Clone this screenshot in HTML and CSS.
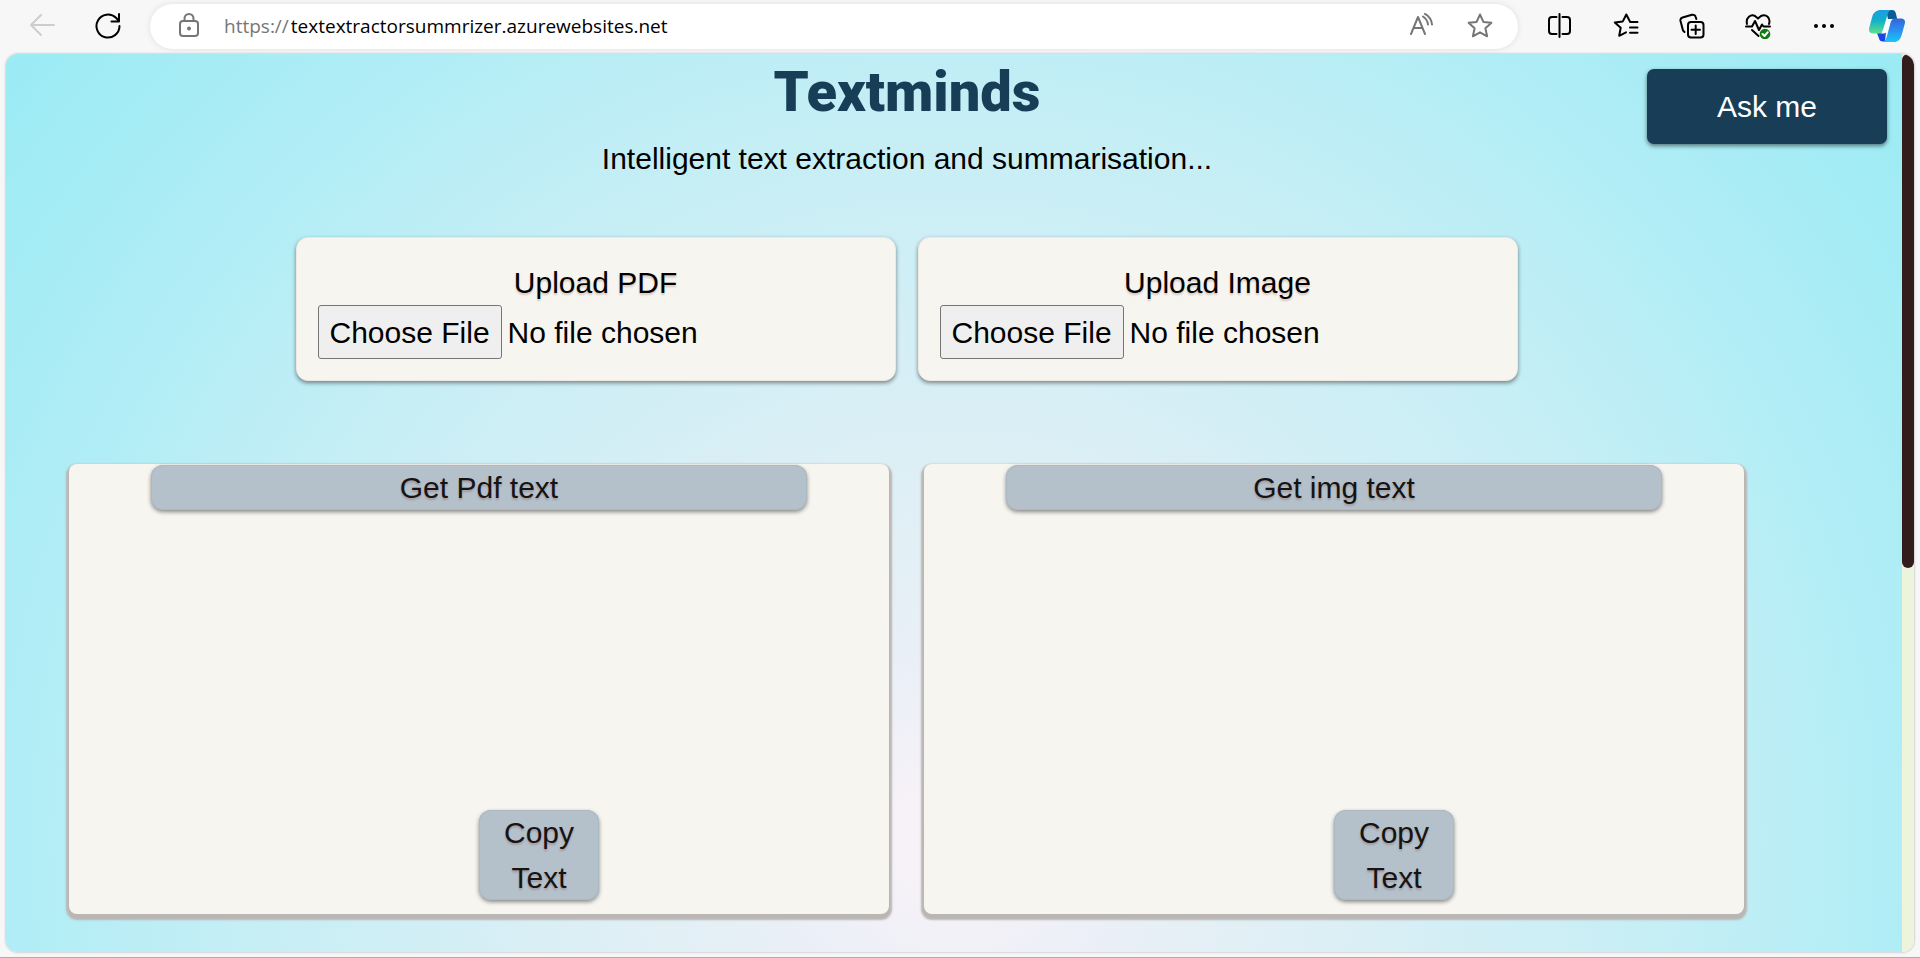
FILE: index.html
```html
<!DOCTYPE html>
<html lang="en">
<head>
<meta charset="utf-8">
<title>Textminds</title>
<link rel="stylesheet" href="styles.css">
</head>
<body>
<header class="toolbar">
  <button class="tool" aria-label="Back" disabled>
    <svg class="icon faded" viewBox="0 0 26 26"><path d="M25 12H2M12 2 2 12l10 10"/></svg>
  </button>
  <button class="tool" aria-label="Refresh">
    <svg class="icon" viewBox="0 0 26 26"><path d="M24.500 13A11.500 11.500 0 1 1 21 4.800L24 8M24 1v7.500h-7.500"/></svg>
  </button>
  <div class="address">
    <svg class="icon grey lock" viewBox="0 0 26 26"><rect x="4" y="8" width="18" height="15" rx="3"/><path d="M8.500 8V5.500a4.500 4.500 0 0 1 9 0V8"/><circle cx="13" cy="15.500" r="1" fill="currentColor"/></svg>
    <label class="scheme" for="url">https://</label>
    <input class="url" id="url" type="text" value="textextractorsummrizer.azurewebsites.net">
    <button class="inner-tool" aria-label="Read aloud">
      <svg class="icon grey" viewBox="0 0 26 26"><path d="M3 21 10 4l7 17M5.500 15h9M15 3.500a11 11 0 0 1 5 8M17 .9a14 14 0 0 1 7 10.600"/></svg>
    </button>
    <button class="inner-tool" aria-label="Add to favorites">
      <svg class="icon grey" viewBox="0 0 26 26"><path d="m13 1.500 3.400 7.400 8 .9-6 5.500 1.700 8L13 19.300l-7.100 4 1.700-8-6-5.500 8-.9Z"/></svg>
    </button>
  </div>
  <div class="actions">
    <button class="tool" aria-label="Split screen">
      <svg class="icon" viewBox="0 0 26 26"><path d="M9.500 4H5a3 3 0 0 0-3 3v11a3 3 0 0 0 3 3h4.500M15.500 4H20a3 3 0 0 1 3 3v11a3 3 0 0 1-3 3h-4.500M12.500 1v23"/></svg>
    </button>
    <button class="tool" aria-label="Favorites">
      <svg class="icon" viewBox="0 0 26 26"><path d="M24.500 9h-7.300L13.300 1.500 9.800 8.400l-8 1 5.900 5.400-1.500 8L13 19.300M17 14.500h7.500M17 19.800h7.500"/></svg>
    </button>
    <button class="tool" aria-label="Collections">
      <svg class="icon" viewBox="0 0 26 26"><rect x="9" y="9" width="15.500" height="15.500" rx="3"/><path d="M16.700 12.500v8.500M12.500 16.700H21M5.500 19 4 17.500 1.500 8a3 3 0 0 1 2-3.500l9.500-2.700A3 3 0 0 1 16.700 4l.6 2"/></svg>
    </button>
    <button class="tool" aria-label="Browser essentials">
      <svg class="icon" viewBox="0 0 26 26"><path d="M2 11C.5 4.500 6 1 10 3l3 2.600L16 3c5-2.500 10 2 8 8M1 13.500h6l3-5.500 4 9 3-5.500 1.500 2H25M7 17l6.500 6"/><circle cx="20" cy="21" r="5.300" fill="#107c10" stroke="none"/><path d="m17.500 21 2 2 3.300-3.800" stroke="#fff"/></svg>
    </button>
    <button class="tool" aria-label="Settings and more">
      <svg class="icon" viewBox="0 0 26 26"><g fill="currentColor" stroke="none"><circle cx="5" cy="13" r="2"/><circle cx="13" cy="13" r="2"/><circle cx="21" cy="13" r="2"/></g></svg>
    </button>
    <button class="copilot" aria-label="Copilot">
      <svg class="copilot-logo" viewBox="0 0 36 32">
        <defs>
          <linearGradient id="teal" x1="0" y1="0" x2="0" y2="1"><stop offset="0" stop-color="#1b9de2"/><stop offset=".45" stop-color="#12b0c9"/><stop offset="1" stop-color="#5fe08a"/></linearGradient>
          <linearGradient id="blue" x1="0" y1="0" x2="0" y2="1"><stop offset="0" stop-color="#3565d8"/><stop offset=".5" stop-color="#2c8ff0"/><stop offset="1" stop-color="#16c6f8"/></linearGradient>
        </defs>
        <path fill="#0b5c93" d="M17 0h6c2.500 0 3.300 1.500 4 4l1.200 5H19Z"/>
        <path fill="#1746e0" d="m8 23 9-1-1 9.500h-2c-2.500 0-3.500-1-4.300-4Z"/>
        <path fill="url(#blue)" d="M24 8.500h8c3.500 0 4.600 2.300 3.700 5.500l-3 11c-1.300 4.500-3.700 7-8 7H13c2.700 0 3.700-1.500 4.700-5l3-11c1-4 1.500-6 3.300-7.500Z"/>
        <path fill="url(#teal)" d="M12 0h11c-2.500 0-3.600 1.500-4.600 5l-4 13.500c-.9 3-2 5-5 5H4c-3.500 0-4.600-2.500-3.700-6l3-11C4.500 2.500 7.500 0 12 0Z"/>
        <path fill="#fafdff" d="M17.800 9H24c-2 .5-2.700 2.500-3.300 5l-1.500 5c-.8 3-2 4.500-5.500 4.500H10c3 0 4-2 4.900-5Z"/>
      </svg>
    </button>
  </div>
</header>

<div class="viewport">
  <main class="page">
    <div class="top">
      <div class="hero">
        <h1 class="title">Textminds</h1>
        <p class="subtitle">Intelligent text extraction and summarisation...</p>
      </div>
      <button class="ask">Ask me</button>
    </div>
    <div class="uploads">
      <div class="card">
        <label class="card-label" for="pdf">Upload PDF</label>
        <input class="file" id="pdf" type="file">
      </div>
      <div class="card">
        <label class="card-label" for="image">Upload Image</label>
        <input class="file" id="image" type="file">
      </div>
    </div>
    <div class="panels">
      <section class="panel">
        <button class="soft get">Get Pdf text</button>
        <button class="soft copy">Copy Text</button>
      </section>
      <section class="panel">
        <button class="soft get">Get img text</button>
        <button class="soft copy">Copy Text</button>
      </section>
    </div>
  </main>
  <div class="scrollbar"><div class="thumb"></div></div>
</div>
</body>
</html>
```
FILE: styles.css
```css
* {
  box-sizing: border-box;
}

body {
  margin: 0;
  height: 100vh;
  display: flex;
  flex-direction: column;
  overflow: hidden;
  background: #f7f7f7;
  border-bottom: 1px solid #adadb0;
  color: #000;
  font: 30px/45px "Liberation Sans", Arial, sans-serif;
}

button,
input {
  font: inherit;
  color: inherit;
}

/* Browser toolbar */

.toolbar {
  flex: none;
  display: flex;
  align-items: center;
  height: 54px;
  padding: 0 3px 2px 9px;
}

.tool,
.inner-tool,
.copilot {
  display: flex;
  align-items: center;
  justify-content: center;
  flex: none;
  height: 44px;
  padding: 0;
  border: 0;
  background: none;
}

.tool {
  width: 66px;
}

.inner-tool {
  width: 59px;
}

.copilot {
  width: 60px;
}

.icon {
  width: 26px;
  height: 26px;
  fill: none;
  stroke: currentColor;
  stroke-width: 2;
  stroke-linecap: round;
  stroke-linejoin: round;
}

.grey {
  color: #767676;
}

.faded {
  color: #cdcdcd;
}

.address {
  flex: 1;
  display: flex;
  align-items: center;
  height: 45px;
  margin: 0 9px;
  padding: 0 9px 0 26px;
  border-radius: 23px;
  background: #fff;
  box-shadow: 0 0 6px rgba(0, 0, 0, 0.1);
  font: 19px/28px "Open Sans", "Noto Sans", sans-serif;
}

.lock {
  margin-right: 22px;
}

.scheme {
  margin-right: 2px;
  color: #767676;
}

.url {
  flex: 1;
  min-width: 0;
  padding: 0;
  border: 0;
  outline: 0;
  background: none;
}

.actions {
  display: flex;
}

.copilot-logo {
  width: 36px;
  height: 32px;
}

/* Page frame */

.viewport {
  flex: 1;
  min-height: 0;
  display: flex;
  margin: 0 6px 5px;
  border-radius: 12px;
  overflow: hidden;
  box-shadow: 0 0 2px 1px rgba(0, 0, 0, 0.14);
}

.page {
  flex: 1;
  background: radial-gradient(circle 1229px at 50% 783px, #fbf3f7, #e9eff7 16%, #deeff5 29%, #c6eef5 58%, #b0edf6 77%, #9aebf4);
}

.scrollbar {
  width: 12px;
  background: #ecf4dc;
}

.thumb {
  height: 57.2%;
  border-radius: 6px;
  background: #331d1c;
}

/* Heading */

.top {
  display: grid;
  padding: 5px 15px 0 0;
}

.hero,
.ask {
  grid-area: 1 / 1;
}

.hero {
  width: 1802px;
  max-width: 96%;
  text-align: center;
}

.title {
  margin: 0;
  color: #173d57;
  font: 900 56px/66px Roboto, sans-serif;
}

.subtitle {
  margin: 11px 0 0;
}

.ask {
  justify-self: end;
  width: 240px;
  height: 75px;
  margin-top: 10px;
  border: 0;
  border-radius: 7px;
  background: #173d57;
  box-shadow: 0 2px 4px rgba(0, 0, 0, 0.5);
  color: #fff;
}

/* Upload cards */

.uploads,
.panels {
  display: flex;
  justify-content: center;
  padding-right: 95px;
}

.uploads {
  gap: 22px;
  margin-top: 56px;
}

.card {
  flex: 0 1 600px;
  padding: 22px 21px 21px;
  border: 1px solid #ede8e2;
  border-radius: 12px;
  background: #f7f5f0;
  box-shadow: 0 2px 4px rgba(0, 0, 0, 0.45);
}

.card-label {
  display: block;
  text-align: center;
  text-shadow: 0 2px 2px rgba(120, 60, 40, 0.25);
}

.file {
  display: block;
  width: 100%;
}

.file::file-selector-button {
  height: 54px;
  margin-right: 6px;
  padding: 0 11px;
  border: 1px solid #767676;
  border-radius: 3px;
  background: #efefef;
  font: inherit;
}

/* Result panels */

.panels {
  gap: 35px;
  margin-top: 83px;
}

.panel {
  flex: 0 1 820px;
  display: flex;
  flex-direction: column;
  justify-content: space-between;
  height: 450px;
  padding: 1px 0 14px;
  border-radius: 8px;
  background: #f7f5f0;
  box-shadow: 0 3px 2px 3px #bab6b4;
}

.soft {
  padding: 0;
  border: 0;
  border-radius: 12px;
  background: #b4c1cb;
  box-shadow: inset 0 0 0 1px #aab9c3, 0 2px 4px rgba(0, 0, 0, 0.45);
  color: #161313;
  text-shadow: 0 2px 2px rgba(120, 60, 60, 0.3);
}

.get {
  align-self: center;
  width: 80%;
}

.copy {
  width: 120px;
  margin-left: 50%;
  padding: 0 16px;
}
```
